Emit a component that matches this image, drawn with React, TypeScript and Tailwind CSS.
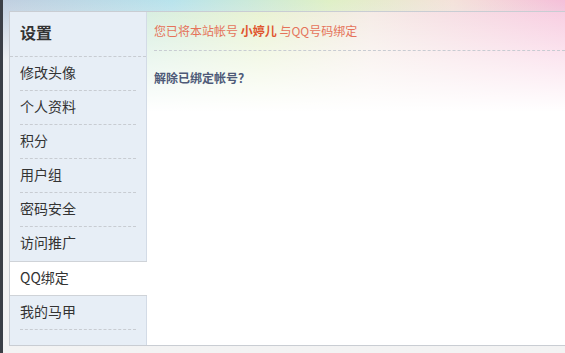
import React from "react";

const items = ["修改头像", "个人资料", "积分", "用户组", "密码安全", "访问推广"];

export default function App() {
  return (
    <div
      className="w-[565px] h-[353px] flex overflow-hidden text-[#333]"
      style={{ fontFamily: '"Noto Sans CJK SC", "Liberation Sans", sans-serif' }}
    >
      {/* dark window edge */}
      <div className="w-[3px] shrink-0 bg-[#3b3f46]" />

      <div className="flex-1 flex flex-col bg-[linear-gradient(to_bottom,transparent_0,#eef0f2_60px,#f3f3f3_100%),linear-gradient(to_right,#c0cfe0_0,#b8e3ec_30%,#dff0c6_58%,#f4e2da_80%,#f5bfd9_100%)]">
        <div className="h-[11px] shrink-0" />

        <div className="ml-[6px] h-[335px] flex border-y border-l border-[#c9cdd3] bg-[linear-gradient(to_bottom,rgba(255,255,255,0.15)_0,rgba(255,255,255,0.55)_45px,#fff_100px),linear-gradient(to_right,#bde4ef_0,#d2ecdc_25%,#e6f1cc_45%,#f4e8e2_65%,#f7c6dd_100%)]">
          {/* sidebar */}
          <div className="w-[137px] shrink-0 flex flex-col bg-[#e7eef6] border-r border-[#d3dbe6]">
            <div className="h-[45px] flex items-center pl-[10px] pb-[4px] border-b border-dashed border-[#c8ccd2] text-[16px] font-bold text-[#333]">
              设置
            </div>
            {items.map((t, i) => (
              <div key={t} className="h-[34px] flex flex-col">
                <div className="flex-1 flex items-center pl-[10px] pb-[3px] text-[14px]">{t}</div>
                {i < items.length - 1 && (
                  <div className="mx-[10px] border-b border-dashed border-[#c8ccd2]" />
                )}
              </div>
            ))}
            <div className="h-[35px] -mr-px flex items-center pl-[10px] pb-[3px] text-[14px] bg-white border-y border-[#cfd3d8]">
              QQ绑定
            </div>
            <div className="h-[34px] flex flex-col">
              <div className="flex-1 flex items-center pl-[10px] pb-[3px] text-[14px]">我的马甲</div>
              <div className="mx-[10px] border-b border-dashed border-[#c8ccd2]" />
            </div>
          </div>

          {/* main */}
          <div className="flex-1 pl-[7px]">
            <div className="h-[39px] flex items-center pb-[1px] text-[12px] text-[#e5735a] border-b border-dashed border-[#c8ccd2]">
              您已将本站帐号&nbsp;<b className="text-[#e0562f]">小婷儿</b>&nbsp;与QQ号码绑定
            </div>
            <div className="mt-[18px] text-[12px] font-bold text-[#4e5a78]">解除已绑定帐号？</div>
          </div>
        </div>
      </div>
    </div>
  );
}
